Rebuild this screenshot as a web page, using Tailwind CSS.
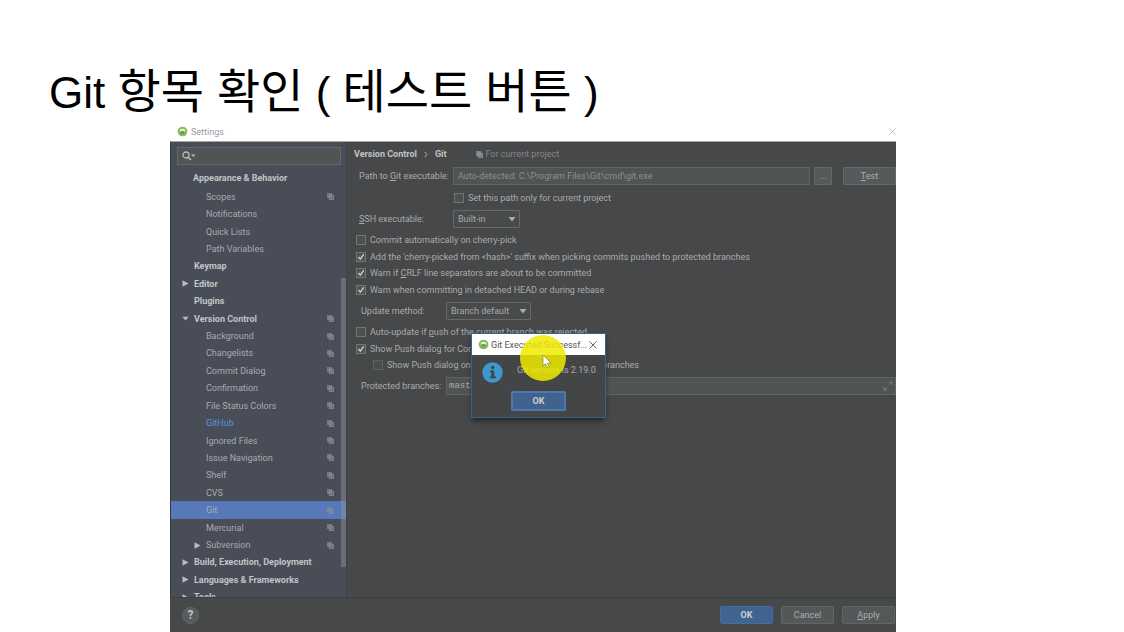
<!DOCTYPE html>
<html lang="ko">
<head>
<meta charset="utf-8">
<meta name="viewport" content="width=device-width, initial-scale=1">
<title>Git 항목 확인</title>
<script src="https://cdn.jsdelivr.net/npm/@tailwindcss/browser@4"></script>
</head>
<body class="flex min-h-screen flex-col overflow-hidden bg-white font-[Roboto,'Noto_Sans_CJK_KR',sans-serif] text-[9px] leading-3 text-[#a9abac]">
<svg class="hidden">
  <symbol id="copy" viewBox="0 0 7 7"><path d="M0 0h5v5H0z" fill="currentColor" fill-opacity=".7"/><path d="M2 2h5v5H2z" fill="currentColor" fill-opacity=".6"/><path d="M2 2h4.600v4.600H2z" fill="none" stroke="currentColor" stroke-width=".6"/></symbol>
  <symbol id="right" viewBox="0 0 7 7"><path d="M.5.300 6.500 3.500.5 6.700z" fill="currentColor"/></symbol>
  <symbol id="down" viewBox="0 0 8 8"><path d="M.5 2h7L4 6.400z" fill="currentColor"/></symbol>
  <symbol id="logo" viewBox="0 0 12 12"><circle cx="6" cy="6" r="5.300" fill="#84bd5c"/><path d="M3 5.600a3 2.600 0 0 1 6 0z" fill="#e6f0dc"/><path d="M6 5.500 4.200 9M6 5.500 7.800 9" stroke="#4f7d45" stroke-width="1" fill="none"/></symbol>
  <symbol id="close" viewBox="0 0 8 8"><path d="M.5.500l7 7M7.500.500l-7 7" stroke="currentColor" fill="none"/></symbol>
</svg>
<h1 class="px-[49px] pt-[63px] text-[44px] leading-[58px] font-normal text-black font-['Liberation_Sans','Noto_Sans_CJK_KR',sans-serif]">Git <span class="text-[47px]">항목 확인</span> ( <span class="text-[47px]">테스트 버튼</span> )</h1>

<main class="relative mr-[228px] ml-[170px] flex flex-1 flex-col bg-[#474849]">
  <header class="flex h-5 items-center border-b border-[#a6a8a8] bg-white pl-[7px] text-[#999b9b]">
    <svg class="size-[11px]"><use href="#logo"/></svg>
    <span class="ml-[3px] flex-1">Settings</span>
    <button aria-label="Close" class="text-[#b8b8b8]"><svg class="size-[7px]"><use href="#close"/></svg></button>
  </header>

  <div class="flex h-[455px]">
    <aside class="relative flex w-[176px] shrink-0 flex-col overflow-hidden border-l border-[#303846] bg-[#484d58] pt-[5px]">
      <label class="mr-[5px] ml-1.5 flex h-[18px] shrink-0 items-center border border-[#626968] bg-[#505454] pl-1">
        <svg class="h-2.5 w-3.5" viewBox="0 0 14 10" fill="none" stroke="#b9bcbd"><circle cx="4" cy="4" r="3" stroke-width="1.300"/><path d="M6.200 6.200 9 9" stroke-width="1.600"/><path d="M9 3.500h4.500L11.250 6z" fill="#b9bcbd" stroke="none"/></svg>
        <input aria-label="Search settings" class="min-w-0 flex-1 bg-transparent outline-none">
      </label>
      <div class="mt-1 flex h-[18px] shrink-0 items-center pl-[22px] font-bold text-[#c2c4c6]">Appearance &amp; Behavior</div>
      <ul id="tree" class="mt-px grid h-[418px] shrink-0 auto-rows-fr"></ul>
      <div class="absolute top-[136px] right-0 h-[289px] w-[5px] bg-[#8a8f9b]/50"></div>
    </aside>

    <section class="flex min-w-0 flex-1 flex-col overflow-hidden border-l border-[#3e4046] pt-[5px]">
      <div class="flex h-3.5 items-center pl-[7px]">
        <b class="text-[#c2c4c5]">Version Control</b>
        <svg class="mx-[7px] h-[7px] w-1" viewBox="0 0 4 7"><path d="M.8 1 3 3.500.8 6" fill="none" stroke="#b0b2b3"/></svg>
        <b class="text-[#c2c4c5]">Git</b>
        <svg class="mr-0.5 ml-[30px] size-[7px] text-[#96999c]"><use href="#copy"/></svg>
        <span class="text-[#858789]">For current project</span>
      </div>
      <div class="mt-1.5 flex h-[18px] items-center pl-3">
        <label for="path" class="w-[94px] shrink-0 whitespace-nowrap">Path to <u>G</u>it executable:</label>
        <input id="path" value="Auto-detected: C:\Program Files\Git\cmd\git.exe" class="h-[18px] min-w-0 flex-1 border border-[#626666] bg-[#505454] px-1 text-[#8c9090] outline-none">
        <button class="ml-1 h-[18px] w-[18px] rounded-[1px] border border-[#646868] bg-[#555a5b]">...</button>
        <button class="ml-[11px] h-[18px] w-[53px] rounded-[1px] border border-[#646868] bg-[#555a5b]"><u>T</u>est</button>
      </div>
      <label class="mt-[5px] flex h-4 items-center gap-1 pl-[107px]"><input type="checkbox" class="size-2.5 appearance-none border border-[#707575] bg-[#4c5251]">Set this path only for current project</label>
      <div class="mt-1 flex h-[18px] items-center pl-3">
        <label for="ssh" class="w-[94px]"><u>S</u>SH executable:</label>
        <div class="relative flex items-center"><select id="ssh" class="h-[18px] w-[67px] appearance-none rounded-[1px] border border-[#656969] bg-[#484a4b] pl-1 outline-none"><option>Built-in</option></select><svg class="pointer-events-none absolute right-1 size-2"><use href="#down"/></svg></div>
      </div>
      <div class="mt-1 flex flex-col pl-[9px]">
        <label class="flex h-4 items-center gap-1"><input type="checkbox" class="size-2.5 appearance-none border border-[#707575] bg-[#4c5251]">Commit automatically on cherry-pick</label>
        <label class="flex h-[17px] items-center gap-1"><input type="checkbox" checked class="size-2.5 appearance-none border border-[#707575] bg-[#505656]"><svg class="pointer-events-none -ml-3.5 size-2.5" viewBox="0 0 10 10"><path d="M2.500 5 4.300 7.200 7.700 2.300" fill="none" stroke="#d0d2d2" stroke-width="1.300"/></svg>Add the 'cherry-picked from &lt;hash&gt;' suffix when picking commits pushed to protected branches</label>
        <label class="flex h-4 items-center gap-1"><input type="checkbox" checked class="size-2.5 appearance-none border border-[#707575] bg-[#505656]"><svg class="pointer-events-none -ml-3.5 size-2.5" viewBox="0 0 10 10"><path d="M2.500 5 4.300 7.200 7.700 2.300" fill="none" stroke="#d0d2d2" stroke-width="1.300"/></svg><span>Warn if <u>C</u>RLF line separators are about to be committed</span></label>
        <label class="flex h-[17px] items-center gap-1"><input type="checkbox" checked class="size-2.5 appearance-none border border-[#707575] bg-[#505656]"><svg class="pointer-events-none -ml-3.5 size-2.5" viewBox="0 0 10 10"><path d="M2.500 5 4.300 7.200 7.700 2.300" fill="none" stroke="#d0d2d2" stroke-width="1.300"/></svg>Warn when committing in detached HEAD or during rebase</label>
      </div>
      <div class="mt-1 flex h-[18px] items-center pl-3.5">
        <label for="update" class="w-[85px]">Update method:</label>
        <div class="relative flex items-center"><select id="update" class="h-[18px] w-[85px] appearance-none rounded-[1px] border border-[#656969] bg-[#484a4b] pl-1 outline-none"><option>Branch default</option></select><svg class="pointer-events-none absolute right-1 size-2"><use href="#down"/></svg></div>
      </div>
      <div class="mt-1 flex flex-col pl-[9px]">
        <label class="flex h-4 items-center gap-1"><input type="checkbox" class="size-2.5 appearance-none border border-[#707575] bg-[#4c5251]"><span>Auto-update if <u>p</u>ush of the current branch was rejected</span></label>
        <label class="flex h-[17px] items-center gap-1"><input type="checkbox" checked class="size-2.5 appearance-none border border-[#707575] bg-[#505656]"><svg class="pointer-events-none -ml-3.5 size-2.5" viewBox="0 0 10 10"><path d="M2.500 5 4.300 7.200 7.700 2.300" fill="none" stroke="#d0d2d2" stroke-width="1.300"/></svg>Show Push dialog for Commit and Push</label>
        <label class="flex h-4 items-center gap-1 pl-[17px]"><input type="checkbox" class="size-2.5 appearance-none border border-[#5e6262] bg-[#4a4e4d]">Show Push dialog only when committing to protected branches</label>
      </div>
      <div class="mt-1 flex h-[18px] items-center pl-3.5">
        <label for="protected" class="w-[85px] shrink-0">Protected branches:</label>
        <div class="flex h-[18px] min-w-0 flex-1 items-center border border-[#606464] bg-[#505454] pr-0.5 pl-0.5">
          <input id="protected" value="master" class="min-w-0 flex-1 bg-transparent font-['Liberation_Mono',monospace] outline-none">
          <svg class="size-2.5" viewBox="0 0 10 10" fill="none" stroke="#777b7b"><path d="M6 1h3v3M9 1 6.500 3.500M4 9H1V6M1 9l2.500-2.500"/></svg>
        </div>
      </div>
    </section>
  </div>

  <footer class="flex flex-1 items-center border-t border-[#3d3f40] pr-px pl-3">
    <button aria-label="Help" class="size-[17px] rounded-full border border-[#626868] bg-[#565c5c] text-[12px] leading-none font-bold text-[#c0c2c2]">?</button>
    <div class="ml-auto flex gap-2">
      <button class="h-[18px] w-[53px] rounded-[2px] border border-[#476da0] bg-[#40638f] font-bold text-[#ccd0d6]">OK</button>
      <button class="h-[18px] w-[53px] rounded-[2px] border border-[#616565] bg-[#555859]">Cancel</button>
      <button class="h-[18px] w-[53px] rounded-[2px] border border-[#616565] bg-[#555859]"><u>A</u>pply</button>
    </div>
  </footer>

  <div role="dialog" aria-label="Git Executed Successfully" class="absolute top-[211px] left-[301px] flex w-[135px] flex-col border border-[#34658f] bg-[#444546] pb-1.5 shadow-md shadow-black/40">
    <div class="flex h-[21px] items-center bg-white pr-2 pl-1.5 text-[#555]">
      <svg class="size-[11px] shrink-0"><use href="#logo"/></svg>
      <span class="ml-0.5 flex-1 whitespace-nowrap">Git Executed Successf...</span>
      <button aria-label="Close dialog"><svg class="size-2 text-[#666]"><use href="#close"/></svg></button>
    </div>
    <div class="flex h-[34px] items-center pl-2.5">
      <svg class="size-[21px]" viewBox="0 0 21 21"><circle cx="10.500" cy="10.500" r="10.200" fill="#3f97cd"/><circle cx="10.700" cy="5.500" r="1.700" fill="#3f464b"/><path d="M8 8.500h4.200v6H14v1.800H7.800v-1.800h1.500v-4.200H8z" fill="#3f464b"/></svg>
      <span class="-mt-1 ml-3.5">Git version is 2.19.0</span>
    </div>
    <button class="mt-0.5 h-5 w-[55px] self-center rounded-[2px] border-2 border-[#4d79ad] bg-[#41618f] font-bold text-[#ccd0d6]">OK</button>
    <div class="pointer-events-none absolute top-px left-12 size-[46px] rounded-full bg-[#efeb00]/85"></div>
    <svg class="pointer-events-none absolute top-5 left-[70px] h-[15px] w-2.5" viewBox="0 0 10 15"><path d="M1 1v11l2.600-2.400 1.800 4.200 1.900-.9-1.800-3.900H9z" fill="#fff" stroke="#77752b" stroke-width=".6"/></svg>
  </div>
</main>
<script>
const rows = [
  ['Scopes', 1, 1], ['Notifications', 1, 0], ['Quick Lists', 1, 0], ['Path Variables', 1, 0],
  ['Keymap', 0, 0], ['Editor', 0, 0, 'right'], ['Plugins', 0, 0], ['Version Control', 0, 1, 'down'],
  ['Background', 1, 1], ['Changelists', 1, 1], ['Commit Dialog', 1, 1], ['Confirmation', 1, 1],
  ['File Status Colors', 1, 1], ['GitHub', 1, 1], ['Ignored Files', 1, 1], ['Issue Navigation', 1, 1],
  ['Shelf', 1, 1], ['CVS', 1, 1], ['Git', 1, 1], ['Mercurial', 1, 1], ['Subversion', 1, 1, 'right'],
  ['Build, Execution, Deployment', 0, 0, 'right'], ['Languages & Frameworks', 0, 0, 'right'], ['Tools', 0, 0, 'right']
];
document.getElementById('tree').innerHTML = rows.map(([name, child, shared, arrow]) => {
  const indent = child ? 'pl-[23px]' : 'pl-[11px] font-bold text-[#c2c4c6]';
  const tint = name === 'Git' ? 'bg-[#5879b9]' : name === 'GitHub' ? 'text-[#5a94e0]' : '';
  return `<li class="flex items-center pr-3 ${indent} ${tint}">
    <span class="w-3 shrink-0">${arrow ? `<svg class="size-[7px] text-[#b9bcbe]"><use href="#${arrow}"/></svg>` : ''}</span>
    <span class="flex-1 whitespace-nowrap">${name.replace('&', '&amp;')}</span>
    ${shared ? '<svg class="size-[7px] text-[#868b93]"><use href="#copy"/></svg>' : ''}</li>`;
}).join('');
</script>
</body>
</html>
